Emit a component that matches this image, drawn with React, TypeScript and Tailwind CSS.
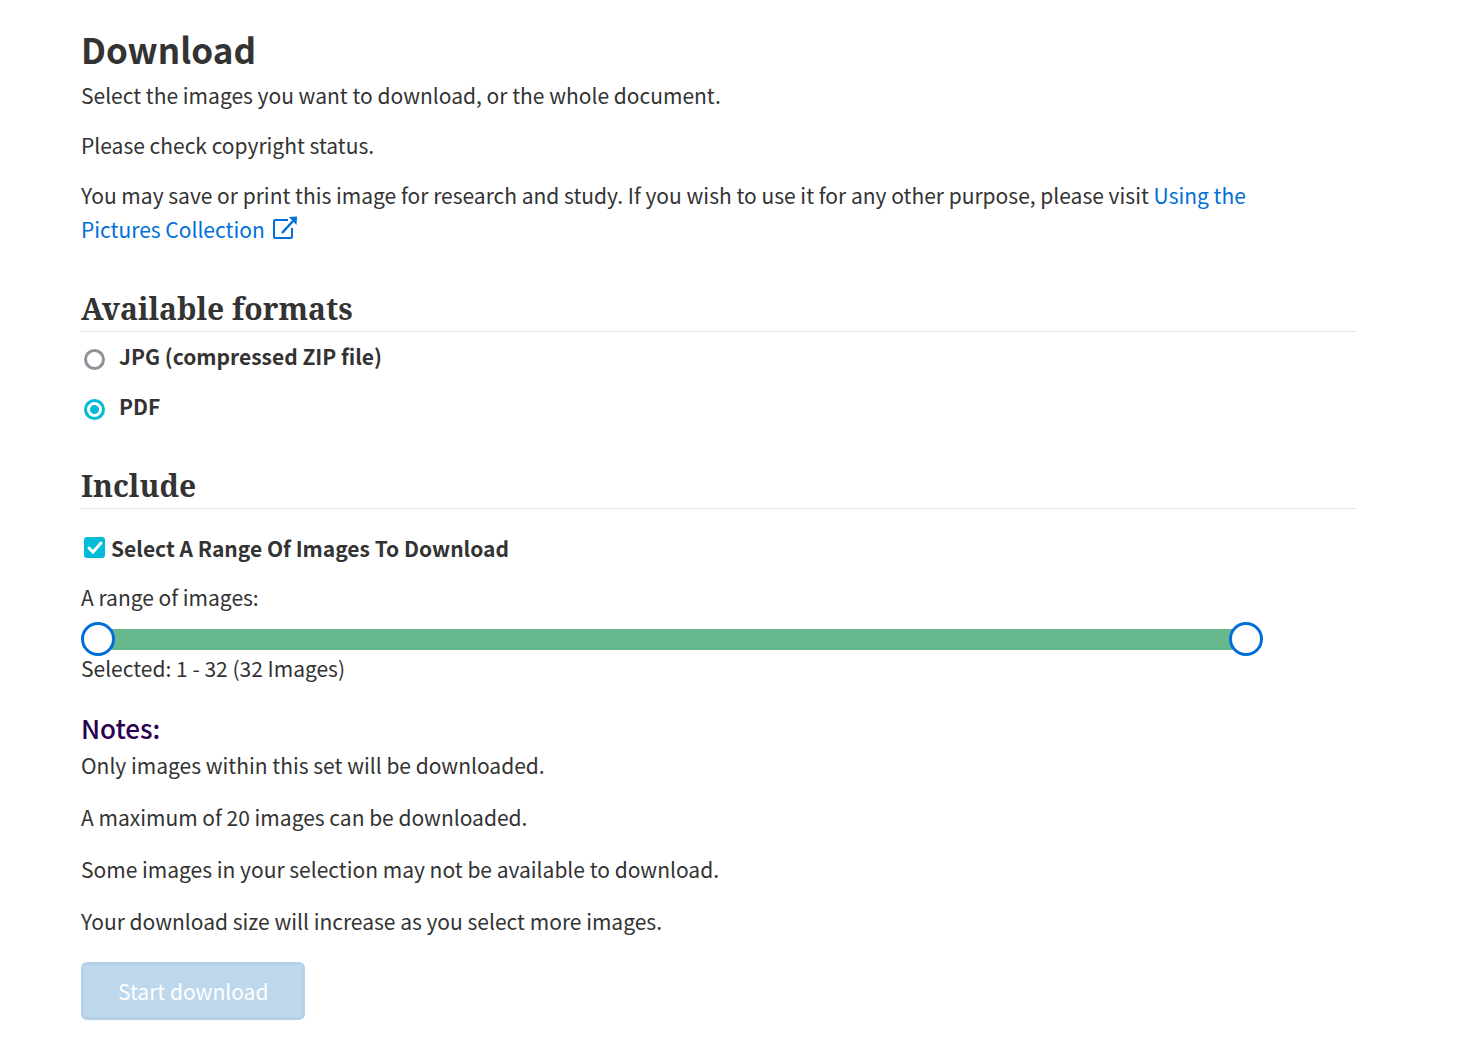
import React, { useState } from "react";

const notes = [
  "Only images within this set will be downloaded.",
  "A maximum of 20 images can be downloaded.",
  "Some images in your selection may not be available to download.",
  "Your download size will increase as you select more images.",
];

const radioClass =
  "mt-[7px] h-[21px] w-[21px] shrink-0 appearance-none rounded-full border-[3px] border-[#92919b] bg-white checked:border-[#00bcd9] checked:bg-[radial-gradient(circle,#00bcd9_0_4px,#fff_5px)]";

const sliderClass =
  "pointer-events-none absolute inset-0 h-[34px] w-full appearance-none bg-transparent [&::-webkit-slider-thumb]:pointer-events-auto [&::-webkit-slider-thumb]:h-[34px] [&::-webkit-slider-thumb]:w-[34px] [&::-webkit-slider-thumb]:appearance-none [&::-webkit-slider-thumb]:rounded-full [&::-webkit-slider-thumb]:border-[3px] [&::-webkit-slider-thumb]:border-[#006dd9] [&::-webkit-slider-thumb]:bg-white";

const sectionHeading =
  "border-b border-[#e3e3e3] font-['Noto_Serif','Liberation_Serif',serif] text-[30px] leading-[45px] font-bold";

export default function App() {
  const [format, setFormat] = useState("pdf");
  const [first, setFirst] = useState(1);
  const [last, setLast] = useState(32);
  const [range, setRange] = useState(true);

  return (
    <main className="bg-white pt-7 pr-[125px] pb-10 pl-[81px] font-['Noto_Sans_CJK_SC','Open_Sans',sans-serif] text-[21px] leading-[34px] text-[#333333]">
      <h1 className="text-[35px] leading-[42px] font-bold">Download</h1>
      <p className="mt-2">Select the images you want to download, or the whole document.</p>
      <p className="mt-4">Please check copyright status.</p>
      <p className="mt-4 pr-[80px]">
        You may save or print this image for research and study. If you wish to use it for any other purpose, please visit{" "}
        <a href="#pictures" className="text-[#006fd8]">
          Using the Pictures Collection
          <svg viewBox="0 0 24 24" className="ml-2 inline h-6 w-6 align-[-2px]" fill="none" stroke="currentColor" strokeWidth="2">
            <path d="M15 4H2.500Q1 4 1 5.500V20.500Q1 22 2.500 22H17.500Q19 22 19 20.500V12" />
            <path d="M9 17 20 5" strokeWidth="2.500" />
            <path d="M16 1 24 .5 23.500 9z" fill="currentColor" stroke="none" />
          </svg>
        </a>
      </p>

      <h2 id="formats" className={sectionHeading + " mt-10"}>Available formats</h2>
      <div role="radiogroup" aria-labelledby="formats" className="font-bold">
        <label className="mt-[7px] flex items-center gap-[14px] pl-[3px]">
          <input type="radio" name="format" className={radioClass} checked={format === "jpg"} onChange={() => setFormat("jpg")} />
          JPG (compressed ZIP file)
        </label>
        <label className="mt-4 flex items-center gap-[14px] pl-[3px]">
          <input type="radio" name="format" className={radioClass} checked={format === "pdf"} onChange={() => setFormat("pdf")} />
          PDF
        </label>
      </div>

      <h2 className={sectionHeading + " mt-10"}>Include</h2>
      <label className="mt-[22px] flex items-center gap-[6px] pl-[3px] font-bold">
        <span className="mb-px grid shrink-0">
          <input
            type="checkbox"
            className="col-start-1 row-start-1 h-[21px] w-[21px] appearance-none rounded-[3px] border-2 border-[#00bcd9] bg-white checked:bg-[#00bcd9]"
            checked={range}
            onChange={(e) => setRange(e.target.checked)}
          />
          <svg viewBox="0 0 21 21" className="pointer-events-none col-start-1 row-start-1 h-[21px] w-[21px]" fill="none" stroke="#fff" strokeWidth="3" strokeLinecap="round">
            <path d="m5 11 4 4 8-9" />
          </svg>
        </span>
        Select A Range Of Images To Download
      </label>

      <p className="mt-[15px]">A range of images:</p>
      <div className="relative mt-2 mr-[93px] flex h-[34px] items-center">
        <div className="mx-[17px] mt-px h-[21px] grow bg-[#67b78f]" />
        <input type="range" aria-label="First image" min={1} max={32} value={first} onChange={(e) => setFirst(Math.min(+e.target.value, last))} className={sliderClass} />
        <input type="range" aria-label="Last image" min={1} max={32} value={last} onChange={(e) => setLast(Math.max(+e.target.value, first))} className={sliderClass} />
      </div>
      <p className="leading-[24px]">
        Selected: {first} - {last} ({last - first + 1} Images)
      </p>

      <h3 className="mt-7 text-[26px] leading-[40px] font-medium text-[#2a0050]">Notes:</h3>
      <div className="flex flex-col gap-[18px]">
        {notes.map((note) => (
          <p key={note}>{note}</p>
        ))}
      </div>
      <button type="button" disabled className="mt-6 rounded-[6px] border-[3px] border-[#b6d1e7] bg-[#bdd7ec] px-[34px] py-[9px] text-white">
        Start download
      </button>
    </main>
  );
}
